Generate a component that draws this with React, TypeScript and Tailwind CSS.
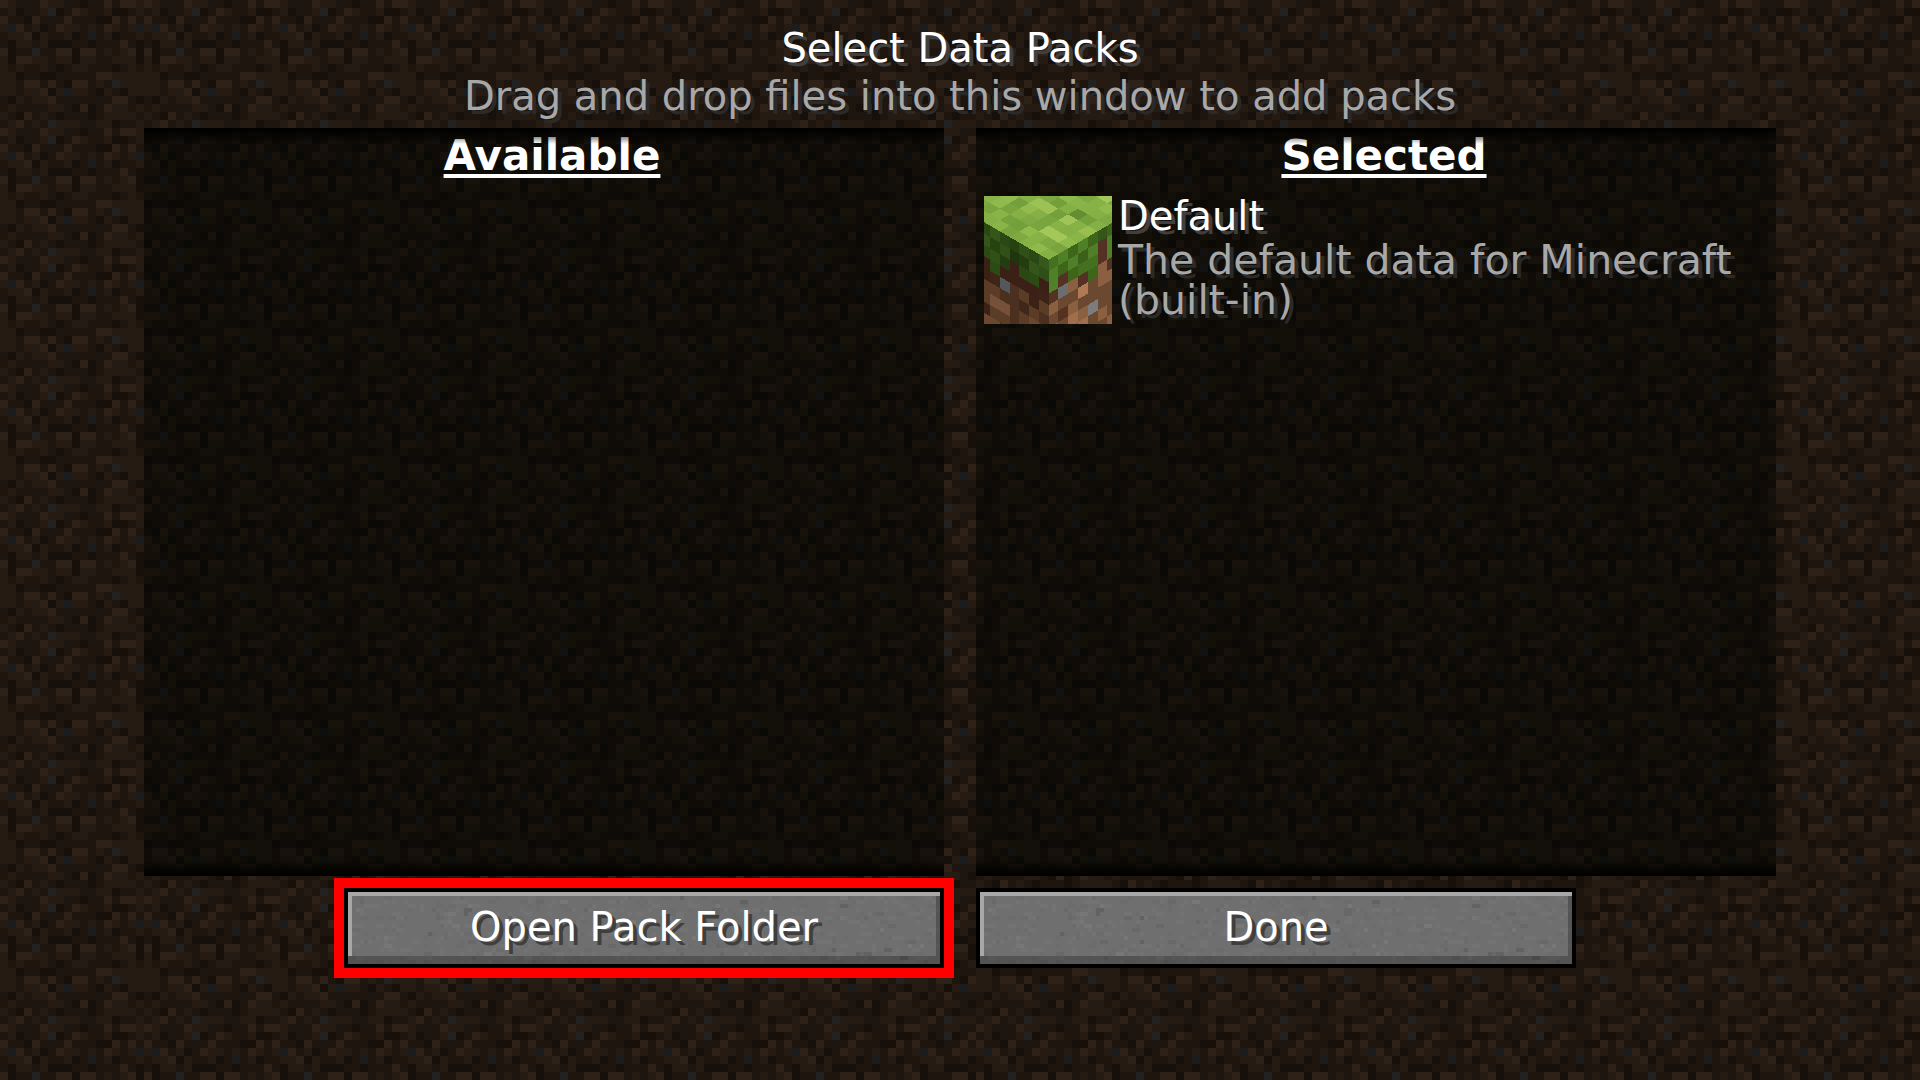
import React from "react";

const DIRT_COLORS: Record<string, string> = {
  A: "#160f0a",
  B: "#1e150f",
  C: "#261b13",
  D: "#2e2118",
  G: "#222222",
  g: "#1b1c1d",
};

const DIRT = [
  "DCBBBDCCBBABBDBD",
  "BCABBCGABDCBBCAA",
  "DBBADBBBDBBBAADB",
  "CgDBCABDCCBCBDCB",
  "BCCDACBBCABgBCAB",
  "BACCBCAAABBABBBD",
  "DABBGBBDDADDBCBC",
  "CADDCCBCCACCBBCC",
  "CBCBBCBABCCBBBAB",
  "CCABBAABBBBBDDCC",
  "CCBDDBDBADDBCBGC",
  "CCBCCDACgCCBACBA",
  "BACBCCDBBBBBBBDD",
  "BCBBBBCCBADABDCC",
  "CBADBCBABBBABCCC",
  "BCDBCBGCCCBBCCAB",
];

function DirtTexture({ id }: { id: string }) {
  return (
    <svg className="block h-full w-full" aria-hidden="true" shapeRendering="crispEdges">
      <defs>
        <pattern id={id} width="128" height="128" patternUnits="userSpaceOnUse">
          {DIRT.map((row, y) =>
            row.split("").map((c, x) => (
              <rect key={`${x}-${y}`} x={x * 8} y={y * 8} width="8" height="8" fill={DIRT_COLORS[c]} />
            )),
          )}
        </pattern>
      </defs>
      <rect width="100%" height="100%" fill={`url(#${id})`} />
    </svg>
  );
}

function stoneSpecks() {
  const specks: { x: number; y: number; w: number; fill: string }[] = [];
  let seed = 20231;
  const next = () => {
    seed = (seed * 1103515245 + 12345) % 2147483648;
    return seed / 2147483648;
  };
  const shade = (t: number) => {
    if (t > 0.98) return "#626262";
    if (t > 0.93) return "#777777";
    if (t > 0.87) return "#686868";
    if (t > 0.5) return "#6c6c6c";
    return "#737373";
  };
  for (let i = 0; i < 700; i++) {
    const tone = next();
    specks.push({
      x: Math.floor(next() * 150) * 4,
      y: Math.floor(next() * 20) * 4,
      w: next() > 0.6 ? 8 : 4,
      fill: shade(tone),
    });
  }
  return specks;
}

const SPECKS = stoneSpecks();

function StoneTexture({ id }: { id: string }) {
  return (
    <svg className="absolute inset-0 h-full w-full" aria-hidden="true" shapeRendering="crispEdges">
      <defs>
        <pattern id={id} width="600" height="80" patternUnits="userSpaceOnUse">
          <rect width="600" height="80" fill="#6f6f6f" />
          {SPECKS.map((s, i) => (
            <rect key={i} x={s.x} y={s.y} width={s.w} height="4" fill={s.fill} />
          ))}
        </pattern>
      </defs>
      <rect width="100%" height="100%" fill={`url(#${id})`} />
    </svg>
  );
}

const U = 29.3;
const V = 17;
const H = 34;
const CX = 194;
const CY = 191;

const LEFT_FACE = [
  ["#36581a", "#2f4f17", "#3a2015", "#3d2317", "#5b3c27", "#4b3020", "#5b3c27"],
  ["#2a4814", "#34561a", "#2b4a14", "#3a2015", "#3a2216", "#5b3c27", "#6b472f"],
  ["#2f5016", "#233c10", "#2a4814", "#3a2015", "#5b3c27", "#3f2719", "#5b3c27", "#5b3c27"],
  ["#26420f", "#1f350d", "#3a2015", "#3a2015", "#4b3020", "#4b3020", "#4b3020", "#4b3020"],
  ["#2a4814", "#2f5016", "#233c10", "#3a2015", "#54585b", "#4b3020", "#77503a", "#5b3c27", "#4b3020"],
  ["#34561a", "#26420f", "#2f5016", "#2b4a14", "#3f2418", "#5b3c27", "#77503a", "#5b3c27", "#6b472f"],
  ["#2a4814", "#34561a", "#2b4a14", "#3a2015", "#3a2015", "#5b3c27", "#5b3c27", "#3a2216", "#6b472f", "#5b3c27"],
];

const RIGHT_FACE = [
  ["#44701f", "#4f7f27", "#4f8128", "#55321f", "#8b6040", "#6b4830", "#8b6040"],
  ["#4f7f27", "#3d661a", "#553024", "#6b6d6f", "#6b4830", "#55321f", "#6b4830"],
  ["#3d661a", "#4f7f27", "#3d661a", "#8b6040", "#6b4830", "#8b6040", "#a06e4a", "#8b6040"],
  ["#4f7f27", "#3a6019", "#44701f", "#553024", "#b07a54", "#6b4830", "#8b6040", "#a06e4a"],
  ["#3d661a", "#4f7f27", "#44701f", "#3d661a", "#6b4830", "#6b4830", "#7b7c7d", "#6b4830", "#6b4830"],
  ["#345619", "#553024", "#553024", "#8b6040", "#8b6040", "#6b4830", "#6b4830", "#8b6040", "#6b4830"],
  ["#3d661a", "#4f7f27", "#4f7f27", "#553024", "#8b6040", "#6b4830", "#6b4830", "#6b4830", "#8b6040", "#6b4830"],
];

const TOP_SPECIAL: Record<string, string> = {
  "0,0": "#84b045",
  "2,2": "#a3c75a",
  "2,1": "#a3c758",
  "4,5": "#9cc255",
  "4,4": "#9cc255",
  "3,5": "#94bb4e",
  "5,2": "#648f31",
  "4,3": "#73a03b",
  "4,2": "#a0c45a",
  "4,0": "#98bf50",
  "5,4": "#73a03b",
  "1,4": "#73a03b",
  "1,5": "#76a23c",
  "2,3": "#79a53f",
  "1,7": "#79a53f",
  "3,6": "#73a03b",
  "3,7": "#94bb4e",
  "8,2": "#a3c75a",
  "5,1": "#73a03b",
  "3,3": "#79a53f",
};
const TOP_SHADES = ["#84b045", "#89b548", "#7fa942", "#8fba4c", "#84b045", "#7aa53e", "#86b246"];

function pts(list: number[][]) {
  return list.map((p) => p.join(",")).join(" ");
}

function GrassBlockIcon() {
  const top: React.ReactElement[] = [];
  for (let i = 0; i < 14; i++) {
    for (let j = 0; j < 14; j++) {
      const x = CX + U * (i - j);
      const y = CY - V * (i + j);
      top.push(
        <polygon
          key={`t${i}-${j}`}
          points={pts([[x, y], [x + U, y - V], [x, y - 2 * V], [x - U, y - V]])}
          fill={TOP_SPECIAL[`${i},${j}`] ?? TOP_SHADES[(i * 5 + j * 3 + i * j) % 7]}
        />,
      );
    }
  }
  const side = (columns: string[][], dir: number) =>
    columns.map((col, c) =>
      col.map((fill, r) => {
        const x0 = CX + dir * U * c;
        const x1 = CX + dir * U * (c + 1);
        const y0 = CY - V * c + H * r;
        const y1 = y0 - V;
        return (
          <polygon key={`${dir}-${c}-${r}`} points={pts([[x0, y0], [x1, y1], [x1, y1 + H], [x0, y0 + H]])} fill={fill} />
        );
      }),
    );
  return (
    <svg viewBox="0 0 384 384" className="h-32 w-32 shrink-0" role="img" aria-label="Grass block" shapeRendering="crispEdges">
      <rect width="384" height="384" fill="#5b3c27" />
      {top}
      {side(LEFT_FACE, -1)}
      {side(RIGHT_FACE, 1)}
    </svg>
  );
}

function Backdrop() {
  return (
    <div className="absolute inset-0 -z-10">
      <div className="absolute inset-0">
        <DirtTexture id="dirt-page" />
      </div>
      <div className="relative grid h-full grid-cols-2 gap-8 px-36">
        <DirtTexture id="dirt-left" />
        <DirtTexture id="dirt-right" />
      </div>
    </div>
  );
}

function PackList({
  title,
  id,
  textureInset,
  children,
}: {
  title: string;
  id: string;
  textureInset: string;
  children?: React.ReactNode;
}) {
  return (
    <section aria-labelledby={id} className="relative isolate overflow-hidden">
      <div className="absolute inset-0 -z-10 bg-[#000300]">
        <div className={`absolute inset-y-0 right-0 opacity-50 ${textureInset}`}>
          <DirtTexture id={`${id}-dirt`} />
        </div>
      </div>
      <h2
        id={id}
        className="pt-2 pl-4 text-center text-[42px] leading-10 font-bold text-white underline decoration-4 underline-offset-4 [text-decoration-skip-ink:none]"
      >
        {title}
      </h2>
      <ul className="mt-5 px-2">{children}</ul>
      <div className="absolute inset-x-0 top-0 h-4 bg-linear-to-b from-black to-transparent" />
      <div className="absolute inset-x-0 bottom-0 h-4 bg-linear-to-t from-black to-transparent" />
    </section>
  );
}

function StoneButton({ label, id, marked }: { label: string; id: string; marked?: boolean }) {
  return (
    <button
      type="button"
      className={
        "relative isolate h-20 w-full max-w-[600px] overflow-hidden border-4 border-black pb-0.5 text-[40px] leading-10 text-white [text-shadow:4px_4px_#3f3f3f] " +
        (marked ? "outline-10 outline-[#ff0000]" : "")
      }
    >
      <span className="absolute inset-0 -z-10">
        <StoneTexture id={id} />
        <span className="absolute inset-x-0 bottom-0 h-2 bg-black/25" />
        <span className="absolute top-0 right-0 bottom-2 w-1 bg-black/25" />
        <span className="absolute inset-x-0 top-0 h-1 bg-[#a8a8a8]" />
        <span className="absolute top-0 bottom-2 left-0 w-1 bg-[#a8a8a8]" />
      </span>
      {label}
    </button>
  );
}

export default function App() {
  return (
    <main className="relative isolate flex min-h-screen flex-col bg-[#1e150f] font-['DejaVu_Sans',sans-serif] text-[40px] leading-10">
      <Backdrop />
      <header className="flex h-32 flex-col items-center gap-2 pt-7 text-center">
        <h1 className="text-white [text-shadow:4px_4px_#3f3f3f]">Select Data Packs</h1>
        <p className="text-[#a8a8a8] [text-shadow:4px_4px_#2a2a2a]">
          Drag and drop files into this window to add packs
        </p>
      </header>
      <div className="grid flex-1 grid-cols-2 gap-8 px-36">
        <PackList title="Available" id="available" textureInset="-left-4" />
        <PackList title="Selected" id="selected" textureInset="-left-20">
          <li className="flex gap-1.5">
            <GrassBlockIcon />
            <div>
              <h3 className="text-white [text-shadow:4px_4px_#3f3f3f]">Default</h3>
              <p className="mt-1 text-[41px] text-[#a8a8a8] [text-shadow:4px_4px_#2a2a2a]">
                The default data for Minecraft (built-in)
              </p>
            </div>
          </li>
        </PackList>
      </div>
      <footer className="grid h-51 grid-cols-2 gap-8 px-36 pt-3">
        <div className="flex justify-end">
          <StoneButton label="Open Pack Folder" id="stone-open" marked />
        </div>
        <div className="flex">
          <StoneButton label="Done" id="stone-done" />
        </div>
      </footer>
    </main>
  );
}
